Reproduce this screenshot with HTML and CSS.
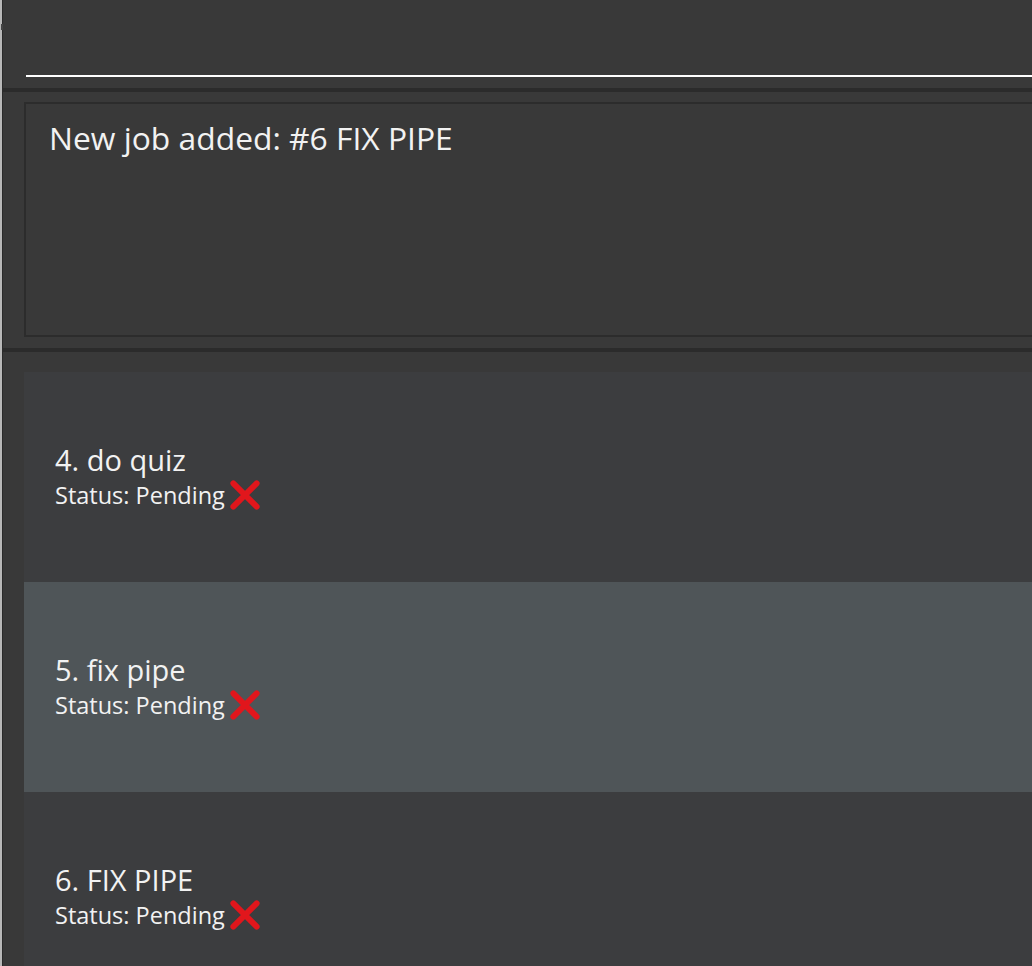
FILE: index.html
```html
<!DOCTYPE html>
<html>
<head>
<meta charset="utf-8">
<link rel="stylesheet" href="styles.css">
</head>
<body>
<div class="window">
  <div class="edge"><span class="tick"></span></div>
  <div class="main">
    <div class="command">
      <div class="command-line"></div>
    </div>
    <div class="divider"></div>
    <div class="result">
      <div class="result-box">New job added: #6 FIX PIPE</div>
    </div>
    <div class="divider"></div>
    <div class="list">
      <div class="job">
        <div class="job-title">4. do quiz</div>
        <div class="job-status">Status: Pending <svg class="cross" viewBox="0 0 32 32" width="34" height="34"><path d="M5 5 L27 27 M27 5 L5 27" stroke="#e1161c" stroke-width="5.5" stroke-linecap="round"/></svg></div>
      </div>
      <div class="job selected">
        <div class="job-title">5. fix pipe</div>
        <div class="job-status">Status: Pending <svg class="cross" viewBox="0 0 32 32" width="34" height="34"><path d="M5 5 L27 27 M27 5 L5 27" stroke="#e1161c" stroke-width="5.5" stroke-linecap="round"/></svg></div>
      </div>
      <div class="job">
        <div class="job-title">6. FIX PIPE</div>
        <div class="job-status">Status: Pending <svg class="cross" viewBox="0 0 32 32" width="34" height="34"><path d="M5 5 L27 27 M27 5 L5 27" stroke="#e1161c" stroke-width="5.5" stroke-linecap="round"/></svg></div>
      </div>
    </div>
  </div>
</div>
</body>
</html>
```
FILE: styles.css
```css
html, body {
  margin: 0;
  padding: 0;
  background: #393939;
  overflow: hidden;
}
.window {
  display: flex;
  width: 1032px;
  height: 966px;
  font-family: "Open Sans", "Noto Sans", sans-serif;
  color: #f2f2f2;
}
.edge {
  width: 3px;
  flex: none;
  background: linear-gradient(to right, #b8b8b8 0 2px, #2a2a2a 2px 3px);
  position: relative;
}
.tick {
  position: absolute;
  left: 1px;
  top: 24px;
  width: 2px;
  height: 6px;
  background: #444;
}
.main {
  flex: 1;
  display: flex;
  flex-direction: column;
  min-width: 0;
  overflow: hidden;
}
.command {
  flex: none;
  height: 88px;
  padding-left: 23px;
  box-sizing: border-box;
}
.command-line {
  margin-top: 75px;
  height: 2px;
  background: #ffffff;
}
.divider {
  height: 4px;
  background: #2b2b2b;
  flex: none;
}
.result {
  flex: none;
  height: 256px;
  padding: 10px 0 0 21px;
  box-sizing: border-box;
}
.result-box {
  height: 235px;
  box-sizing: border-box;
  border: 2px solid #2c2c2c;
  border-right: none;
  padding: 12px 0 0 23px;
  font-size: 31.8px;
  line-height: 44px;
}
.list {
  flex: none;
  padding: 20px 0 0 21px;
}
.job {
  height: 210px;
  background: #3c3d3f;
  padding-left: 31px;
  display: flex;
  flex-direction: column;
  justify-content: center;
}
.job.selected {
  background: #4f5558;
}
.job-title {
  font-size: 29px;
  line-height: 36px;
}
.job-status {
  font-size: 23.5px;
  line-height: 30px;
  display: flex;
  align-items: center;
}
.cross {
  margin-left: 3px;
}
```
